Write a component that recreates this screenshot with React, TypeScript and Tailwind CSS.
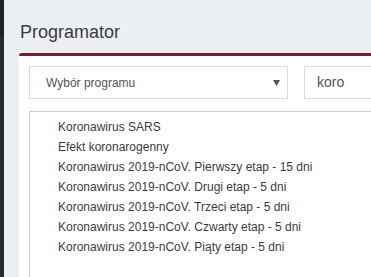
import React from 'react';

export default function App() {
  const items = [
    'Koronawirus SARS',
    'Efekt koronarogenny',
    'Koronawirus 2019-nCoV. Pierwszy etap - 15 dni',
    'Koronawirus 2019-nCoV. Drugi etap - 5 dni',
    'Koronawirus 2019-nCoV. Trzeci etap - 5 dni',
    'Koronawirus 2019-nCoV. Czwarty etap - 5 dni',
    'Koronawirus 2019-nCoV. Piąty etap - 5 dni',
  ];

  return (
    <div className="flex h-[277px] w-[371px] overflow-hidden font-['Liberation_Sans',Arial,sans-serif]">
      {/* sidebar edge */}
      <div className="flex w-[4px] shrink-0 flex-col">
        <div className="h-[36px] bg-[#1a2427]" />
        <div className="flex-1 bg-[#222d30]" />
      </div>

      {/* main */}
      <div className="flex min-w-0 flex-1 flex-col bg-[#eceff3] pl-[15px]">
        <h1 className="pt-[22px] pl-[1px] text-[18px] leading-[20px] font-normal text-[#3c3c3c]">Programator</h1>

        <div className="mt-[11px] flex flex-1 flex-col rounded-t-[3px] border-t-[3px] border-[#7b1b2b] bg-white pt-[10px] pl-[10px] w-[400px]">
          <div className="flex gap-[16px]">
            <div className="flex h-[33px] w-[259px] items-center justify-between border border-[#d9dcdf] pl-[16px] pr-[6px] text-[12px] text-[#555]">
              <span>Wybór programu</span>
              <svg width="7" height="6" viewBox="0 0 7 6" className="mr-[1px]">
                <path d="M0 0 H7 L3.5 6 Z" fill="#555" />
              </svg>
            </div>
            <div className="flex h-[33px] flex-1 items-center border border-[#d9dcdf] pl-[12px] text-[14px] text-[#555]">
              koro
            </div>
          </div>

          <div className="mt-[12px] flex-1 border-t border-l border-[#cccfd2] pt-[5px] pl-[28px]">
            {items.map((it) => (
              <div key={it} className="text-[12px] leading-[20px] text-[#3c3c3c] whitespace-nowrap">
                {it}
              </div>
            ))}
          </div>
        </div>
      </div>
    </div>
  );
}
